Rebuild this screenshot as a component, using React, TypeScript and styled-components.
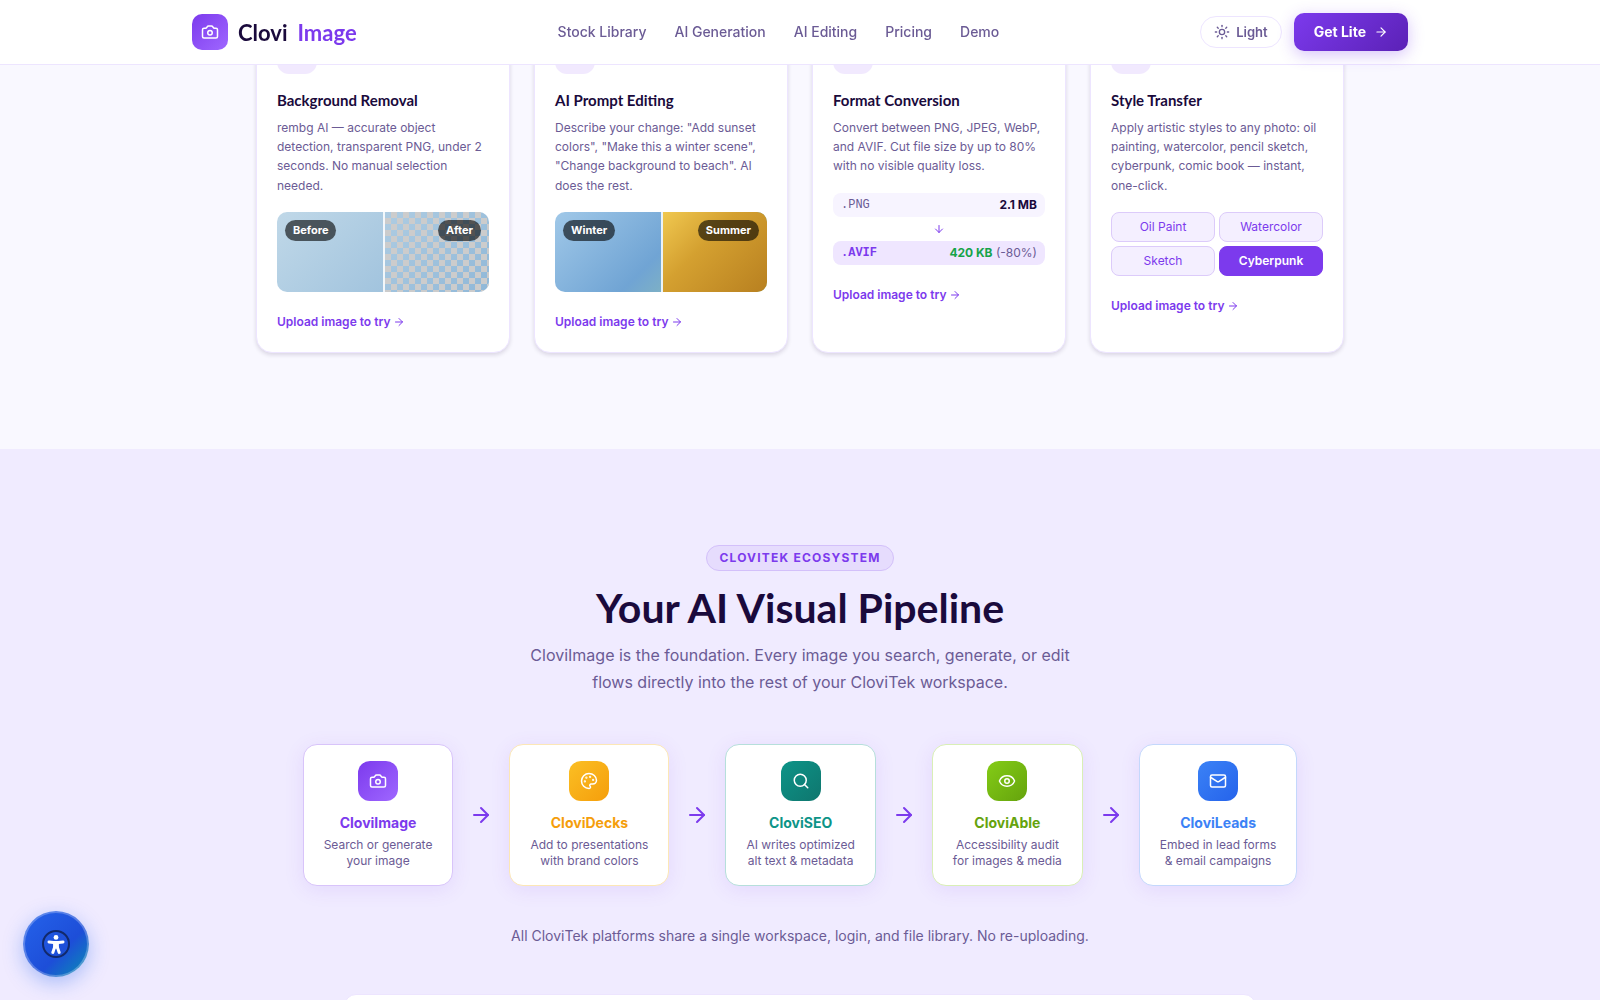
import React from 'react';
import styled, { createGlobalStyle } from 'styled-components';
import {
  ArrowDown, ArrowRight, Camera, Eye, Mail, Palette, Search, Sun,
} from 'lucide-react';

const color = {
  ink: '#1a0a3c',
  muted: '#6b5b95',
  violet: '#7c3aed',
  line: '#ede5ff',
  tint: '#f1e9fe',
  page: '#f9f8ff',
  green: '#16a34a',
};

const body = "Inter, 'Noto Sans', sans-serif";
const display = "Lato, Inter, sans-serif";

const GlobalStyle = createGlobalStyle`
  *, *::before, *::after { box-sizing: border-box; }
  body {
    margin: 0;
    background: ${color.page};
    color: ${color.ink};
    font-family: ${body};
  }
  h2, h3, p { margin: 0; }
  button { font-family: inherit; cursor: pointer; }
  a { text-decoration: none; }
`;

const Page = styled.div`
  height: 100vh;
  overflow: hidden;
`;

/* Header */

const Header = styled.header`
  position: fixed;
  inset: 0 0 auto;
  z-index: 10;
  background: rgba(255, 255, 255, 0.97);
  border-bottom: 1px solid ${color.line};
`;

const HeaderInner = styled.div`
  display: flex;
  align-items: center;
  justify-content: space-between;
  max-width: 1280px;
  height: 64px;
  margin: 0 auto;
  padding: 0 32px;
`;

const Brand = styled.a`
  display: flex;
  align-items: center;
  gap: 10px;
  color: ${color.ink};
  font-family: ${display};
  font-size: 22px;
  font-weight: 700;
`;

const BrandAccent = styled.span`
  color: ${color.violet};
`;

const Tile = styled.span<{ $size: number; $from: string; $to: string }>`
  display: flex;
  align-items: center;
  justify-content: center;
  width: ${(p) => p.$size}px;
  height: ${(p) => p.$size}px;
  border-radius: ${(p) => (p.$size > 36 ? 12 : 10)}px;
  background: linear-gradient(135deg, ${(p) => p.$from}, ${(p) => p.$to});
  color: #fff;
`;

const Nav = styled.nav`
  display: flex;
  gap: 28px;
`;

const NavLink = styled.a`
  color: ${color.muted};
  font-size: 14px;
  font-weight: 500;
  line-height: 20px;
`;

const Actions = styled.div`
  display: flex;
  align-items: center;
  gap: 12px;
`;

const ThemeButton = styled.button`
  display: flex;
  align-items: center;
  gap: 6px;
  height: 32px;
  padding: 0 13px;
  border: 1px solid ${color.line};
  border-radius: 16px;
  background: #fff;
  color: ${color.muted};
  font-size: 13px;
  font-weight: 600;
`;

const PrimaryButton = styled.button`
  display: flex;
  align-items: center;
  gap: 8px;
  height: 38px;
  padding: 0 20px;
  border: 0;
  border-radius: 10px;
  background: linear-gradient(135deg, #7c3aed, #5b21b6);
  box-shadow: 0 4px 16px rgba(124, 58, 237, 0.3);
  color: #fff;
  font-size: 14px;
  font-weight: 700;
  line-height: 20px;
`;

/* Editing tools */

const ToolsSection = styled.section`
  padding: 13px 32px 96px;
`;

const ToolGrid = styled.div`
  display: grid;
  grid-template-columns: repeat(4, 1fr);
  gap: 24px;
  max-width: 1088px;
  margin: 0 auto;
`;

const ToolCard = styled.article`
  display: flex;
  flex-direction: column;
  align-items: stretch;
  padding: 20px;
  border: 1px solid ${color.line};
  border-radius: 16px;
  background: #fff;
  box-shadow: 0 2px 4px rgba(26, 10, 60, 0.14);
`;

const ToolIcon = styled.div`
  width: 40px;
  height: 40px;
  margin-bottom: 16px;
  border-radius: 12px;
  background: ${color.tint};
`;

const ToolTitle = styled.h3`
  margin-bottom: 8px;
  font-family: ${display};
  font-size: 15px;
  font-weight: 700;
  line-height: 20px;
`;

const ToolText = styled.p`
  margin-bottom: 17px;
  color: ${color.muted};
  font-size: 12px;
  line-height: 1.6;
`;

const ToolLink = styled.a`
  display: flex;
  align-items: center;
  gap: 3px;
  margin-top: 20px;
  color: ${color.violet};
  font-size: 12px;
  font-weight: 600;
  line-height: 20px;
`;

const Compare = styled.div<{ $before: string; $after: string }>`
  display: grid;
  grid-template-columns: 1fr 1fr;
  height: 80px;
  border-radius: 10px;
  overflow: hidden;
  background: ${(p) => p.$before};

  > :last-child {
    justify-content: flex-end;
    border-left: 2px solid rgba(255, 255, 255, 0.85);
    background: ${(p) => p.$after};
    background-clip: padding-box;
  }
`;

const CompareSide = styled.div`
  display: flex;
  align-items: flex-start;
  padding: 8px;
`;

const CompareTag = styled.span`
  padding: 0 8px;
  border-radius: 11px;
  background: rgba(0, 0, 0, 0.6);
  color: #fff;
  font-size: 11px;
  font-weight: 700;
  line-height: 21px;
`;

const Conversion = styled.div`
  display: flex;
  flex-direction: column;
`;

const FormatRow = styled.div<{ $result?: boolean }>`
  display: flex;
  align-items: center;
  justify-content: space-between;
  height: 24px;
  padding: 0 8px;
  border-radius: 8px;
  background: ${(p) => (p.$result ? '#efe6ff' : '#f7f4ff')};
  color: ${color.muted};
  font-size: 12px;
  line-height: 16px;

  code {
    color: ${(p) => (p.$result ? color.violet : color.muted)};
    font-family: 'Liberation Mono', monospace;
    font-size: 12px;
    font-weight: ${(p) => (p.$result ? 700 : 400)};
  }

  strong {
    color: ${(p) => (p.$result ? color.green : color.ink)};
    font-weight: 700;
  }
`;

const FormatArrow = styled.div`
  display: flex;
  align-items: center;
  justify-content: center;
  height: 24px;
  color: ${color.violet};
`;

const StyleGrid = styled.div`
  display: grid;
  grid-template-columns: 1fr 1fr;
  gap: 4px;
`;

const StyleChip = styled.button<{ $active?: boolean }>`
  height: 30px;
  padding: 0;
  border: 1px solid ${(p) => (p.$active ? color.violet : '#dccbfa')};
  border-radius: 8px;
  background: ${(p) => (p.$active ? color.violet : '#f4efff')};
  color: ${(p) => (p.$active ? '#fff' : color.violet)};
  font-size: 12px;
  font-weight: ${(p) => (p.$active ? 600 : 400)};
`;

/* Pipeline */

const PipelineSection = styled.section`
  display: flex;
  flex-direction: column;
  align-items: center;
  padding: 96px 32px;
  background: #f0ebff;
`;

const Eyebrow = styled.span`
  margin-bottom: 12px;
  padding: 0 12px;
  border: 1px solid #d3c0fa;
  border-radius: 13px;
  background: #e6dcfd;
  color: ${color.violet};
  font-size: 12px;
  font-weight: 700;
  letter-spacing: 0.1em;
  line-height: 24px;
  text-transform: uppercase;
`;

const SectionTitle = styled.h2`
  margin-bottom: 9px;
  font-family: ${display};
  font-size: 41px;
  font-weight: 700;
  line-height: 50px;
`;

const SectionText = styled.p`
  max-width: 560px;
  margin-bottom: 48px;
  color: ${color.muted};
  font-size: 16px;
  line-height: 27px;
  text-align: center;
`;

const Flow = styled.div`
  display: flex;
  align-items: center;
  gap: 16px;
  margin-bottom: 40px;
  color: ${color.violet};
`;

const ProductCard = styled.a<{ $border: string }>`
  display: flex;
  flex-direction: column;
  align-items: center;
  padding: 16px 20px;
  border: 1px solid ${(p) => p.$border};
  border-radius: 14px;
  background: #fff;
  box-shadow: 0 4px 20px rgba(124, 58, 237, 0.1);
`;

const ProductName = styled.strong<{ $color: string }>`
  margin: 12px 0 4px;
  color: ${(p) => p.$color};
  font-size: 14px;
  font-weight: 700;
  line-height: 20px;
`;

const ProductText = styled.span`
  color: ${color.muted};
  font-size: 12px;
  line-height: 16px;
  text-align: center;
  white-space: pre-line;
`;

const FlowNote = styled.p`
  margin-bottom: 48px;
  color: ${color.muted};
  font-size: 14px;
  line-height: 20px;
`;

const NextCard = styled.div`
  width: 100%;
  max-width: 912px;
  height: 160px;
  border: 1px solid ${color.line};
  border-radius: 12px;
  background: #fff;
`;

const AccessButton = styled.button`
  position: fixed;
  left: 23px;
  bottom: 23px;
  z-index: 20;
  display: flex;
  align-items: center;
  justify-content: center;
  width: 66px;
  height: 66px;
  padding: 0;
  border: 2px solid rgba(255, 255, 255, 0.25);
  border-radius: 50%;
  background: linear-gradient(135deg, #2563eb 0%, #1d4ed8 60%, #0891b2 100%) border-box;
  box-shadow: 0 6px 20px rgba(37, 99, 235, 0.35);
`;

const navItems = ['Stock Library', 'AI Generation', 'AI Editing', 'Pricing', 'Demo'];

const checker = 'conic-gradient(#ccc 25%, transparent 0 50%, #ccc 0 75%, transparent 0) 0 0 / 12px 12px';

const products = [
  { name: 'CloviImage', text: 'Search or generate\nyour image', icon: Camera, from: '#7c3aed', to: '#9f67ff', tone: '#7c3aed', border: '#d8c4fa' },
  { name: 'CloviDecks', text: 'Add to presentations\nwith brand colors', icon: Palette, from: '#fbbf24', to: '#f59e0b', tone: '#f59e0b', border: '#fce7b6' },
  { name: 'CloviSEO', text: 'AI writes optimized\nalt text & metadata', icon: Search, from: '#0d9488', to: '#0f766e', tone: '#0d9488', border: '#b6dfdb' },
  { name: 'CloviAble', text: 'Accessibility audit\nfor images & media', icon: Eye, from: '#84cc16', to: '#65a30d', tone: '#65a30d', border: '#d9efb6' },
  { name: 'CloviLeads', text: 'Embed in lead forms\n& email campaigns', icon: Mail, from: '#3b82f6', to: '#2563eb', tone: '#3b82f6', border: '#c4d8fc' },
];

const styles = ['Oil Paint', 'Watercolor', 'Sketch', 'Cyberpunk'];

function Tool({ title, text, children }: { title: string; text: string; children: React.ReactNode }) {
  return (
    <ToolCard>
      <ToolIcon />
      <ToolTitle>{title}</ToolTitle>
      <ToolText>{text}</ToolText>
      {children}
      <ToolLink href="#">Upload image to try <ArrowRight size={12} /></ToolLink>
    </ToolCard>
  );
}

export default function App() {
  return (
    <Page>
      <GlobalStyle />
      <Header>
        <HeaderInner>
          <Brand href="#">
            <Tile $size={36} $from="#7c3aed" $to="#9f67ff"><Camera size={18} /></Tile>
            <span>Clovi</span>
            <BrandAccent>Image</BrandAccent>
          </Brand>
          <Nav>
            {navItems.map((item) => <NavLink key={item} href="#">{item}</NavLink>)}
          </Nav>
          <Actions>
            <ThemeButton type="button"><Sun size={16} />Light</ThemeButton>
            <PrimaryButton type="button">Get Lite <ArrowRight size={14} /></PrimaryButton>
          </Actions>
        </HeaderInner>
      </Header>

      <ToolsSection>
        <ToolGrid>
          <Tool
            title="Background Removal"
            text="rembg AI — accurate object detection, transparent PNG, under 2 seconds. No manual selection needed."
          >
            <Compare $before="linear-gradient(135deg, #c0d8e8, #90b8d8)" $after={checker}>
              <CompareSide><CompareTag>Before</CompareTag></CompareSide>
              <CompareSide><CompareTag>After</CompareTag></CompareSide>
            </Compare>
          </Tool>
          <Tool
            title="AI Prompt Editing"
            text={'Describe your change: "Add sunset colors", "Make this a winter scene", "Change background to beach". AI does the rest.'}
          >
            <Compare
              $before="linear-gradient(135deg, #a0c8e8, #70a4d4 50%, #a0d0a0)"
              $after="linear-gradient(135deg, #f0c850, #d4a030 40%, #b88020)"
            >
              <CompareSide><CompareTag>Winter</CompareTag></CompareSide>
              <CompareSide><CompareTag>Summer</CompareTag></CompareSide>
            </Compare>
          </Tool>
          <Tool
            title="Format Conversion"
            text="Convert between PNG, JPEG, WebP, and AVIF. Cut file size by up to 80% with no visible quality loss."
          >
            <Conversion>
              <FormatRow><code>.PNG</code><strong>2.1 MB</strong></FormatRow>
              <FormatArrow><ArrowDown size={12} /></FormatArrow>
              <FormatRow $result><code>.AVIF</code><span><strong>420 KB</strong> (-80%)</span></FormatRow>
            </Conversion>
          </Tool>
          <Tool
            title="Style Transfer"
            text="Apply artistic styles to any photo: oil painting, watercolor, pencil sketch, cyberpunk, comic book — instant, one-click."
          >
            <StyleGrid>
              {styles.map((name) => (
                <StyleChip key={name} type="button" $active={name === 'Cyberpunk'}>{name}</StyleChip>
              ))}
            </StyleGrid>
          </Tool>
        </ToolGrid>
      </ToolsSection>

      <PipelineSection>
        <Eyebrow>CloviTek Ecosystem</Eyebrow>
        <SectionTitle>Your AI Visual Pipeline</SectionTitle>
        <SectionText>
          CloviImage is the foundation. Every image you search, generate, or edit
          flows directly into the rest of your CloviTek workspace.
        </SectionText>
        <Flow>
          {products.map(({ name, text, icon: Icon, from, to, tone, border }, i) => (
            <React.Fragment key={name}>
              {i > 0 && <ArrowRight size={24} />}
              <ProductCard href="#" $border={border}>
                <Tile $size={40} $from={from} $to={to}><Icon size={18} /></Tile>
                <ProductName $color={tone}>{name}</ProductName>
                <ProductText>{text}</ProductText>
              </ProductCard>
            </React.Fragment>
          ))}
        </Flow>
        <FlowNote>All CloviTek platforms share a single workspace, login, and file library. No re-uploading.</FlowNote>
        <NextCard />
      </PipelineSection>

      <AccessButton type="button" aria-label="Accessibility options">
        <svg width="28" height="28" viewBox="0 0 28 28" fill="none">
          <circle cx="14" cy="14" r="13" stroke="#12296b" strokeWidth="2" />
          <circle cx="14" cy="7.4" r="2.4" fill="#fff" />
          <path
            d="M7 12 L11.6 12.4 H16.4 L21 12 M12.7 17 L10.8 22.4 M15.3 17 L17.2 22.4"
            stroke="#fff"
            strokeWidth="3"
            strokeLinecap="round"
            strokeLinejoin="round"
          />
          <path d="M11 11.6 H17 L16.8 18.4 H11.2 Z" fill="#fff" />
        </svg>
      </AccessButton>
    </Page>
  );
}
